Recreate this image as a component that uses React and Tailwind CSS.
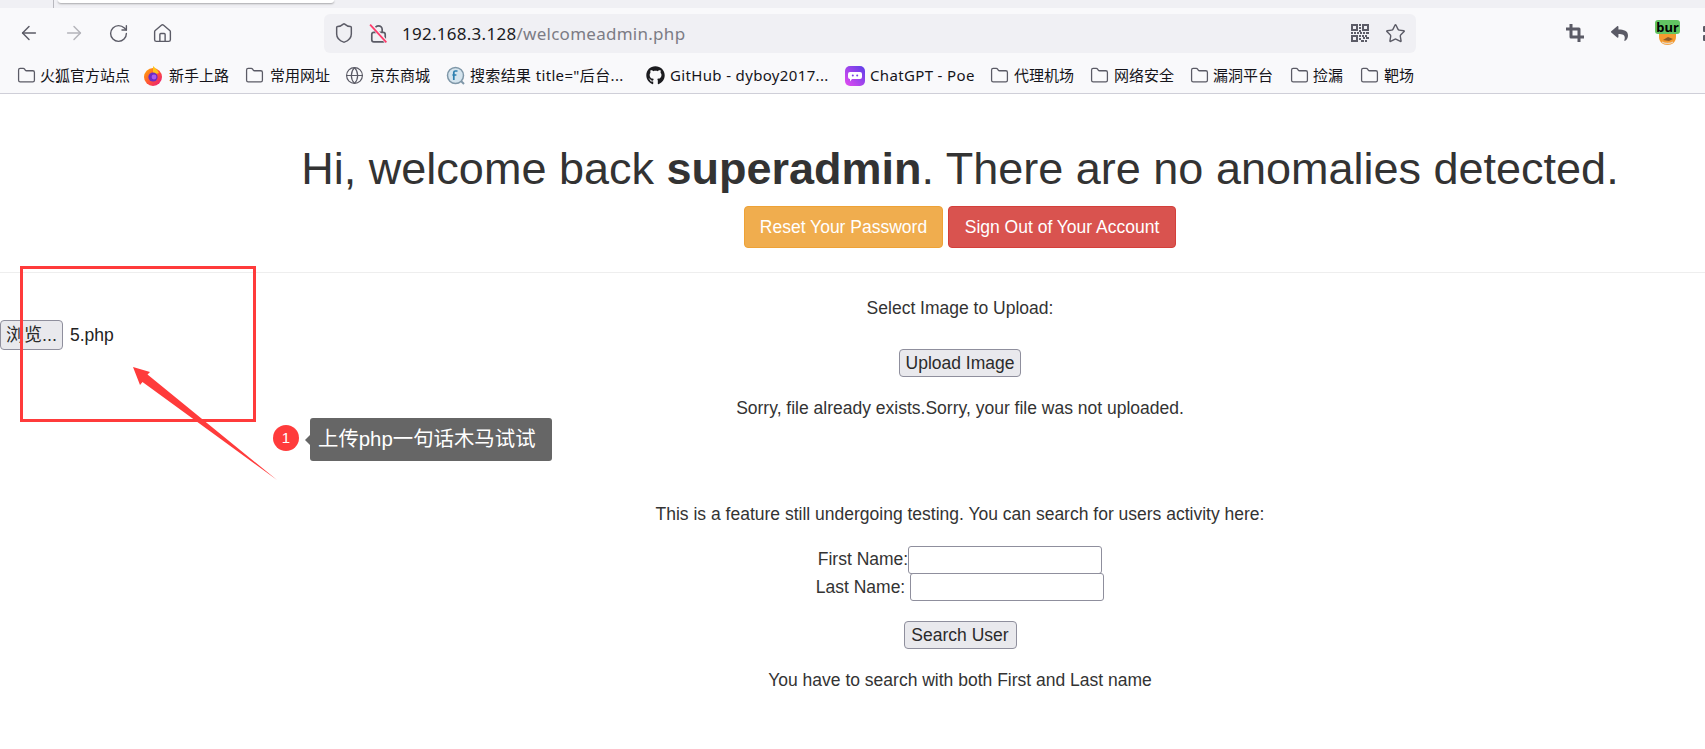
import React from "react";
import { ArrowLeft, ArrowRight, RotateCw, Home, Shield, Star, Folder, Globe } from "lucide-react";
import { FaGithub, FaReply } from "react-icons/fa";

const Fx = () => (
  <svg width="20" height="20" viewBox="0 0 20 20" className="shrink-0">
    <defs>
      <linearGradient id="fxg" x1="0" y1="0" x2="1" y2="1">
        <stop offset="0" stopColor="#ffb000" />
        <stop offset="0.55" stopColor="#ff4f3a" />
        <stop offset="1" stopColor="#e31587" />
      </linearGradient>
    </defs>
    <circle cx="10" cy="11" r="9" fill="url(#fxg)" />
    <path d="M10 0c2 2 5 4 6 7l-6 2z" fill="#ffc21a" />
    <circle cx="10" cy="11" r="4.6" fill="#6b2bc4" />
    <circle cx="11" cy="11" r="2.4" fill="#a45bf0" />
  </svg>
);

const Fav = () => (
  <svg width="20" height="20" viewBox="0 0 20 20" className="shrink-0">
    <circle cx="9.5" cy="9.5" r="8" fill="#d4e4ee" stroke="#7f97a8" strokeWidth="1.5" />
    <path d="M15 15l3 3" stroke="#7f97a8" strokeWidth="2" />
    <path d="M11.5 5H9.2C8.2 5 7.8 5.8 7.8 6.6V14M6.4 9h4" fill="none" stroke="#2c7fb0" strokeWidth="1.7" />
  </svg>
);

const Poe = () => (
  <svg width="20" height="20" viewBox="0 0 20 20" className="shrink-0">
    <defs>
      <linearGradient id="poeg" x1="0" y1="1" x2="1" y2="0">
        <stop offset="0" stopColor="#e64bf0" />
        <stop offset="1" stopColor="#5b3ee8" />
      </linearGradient>
    </defs>
    <rect width="20" height="20" rx="5" fill="url(#poeg)" />
    <path d="M5 6h10a2 2 0 0 1 2 2v3a2 2 0 0 1-2 2H7l-2 2.5V13a2 2 0 0 1-2-2V8a2 2 0 0 1 2-2z" fill="#fff" />
    <circle cx="7.8" cy="9.6" r="1" fill="#7a3fe8" />
    <circle cx="12.2" cy="9.6" r="1" fill="#7a3fe8" />
  </svg>
);

const NoLock = () => (
  <svg width="21" height="21" viewBox="0 0 20 20" fill="none" className="shrink-0">
    <path d="M6.5 9V6.200a3.500 3.500 0 0 1 7 0V9" stroke="#5b5b66" strokeWidth="1.6" />
    <rect x="3.6" y="9" width="12.8" height="9" rx="2" stroke="#5b5b66" strokeWidth="1.6" />
    <path d="M2.500 1.500L18 18.500" stroke="#f0f0f4" strokeWidth="3.4" />
    <path d="M2 1.500L17.500 18.500" stroke="#ff3b6b" strokeWidth="1.7" />
  </svg>
);

const Qr = () => (
  <svg width="18" height="18" viewBox="0 0 18 18" className="shrink-0 text-[#5b5b66]" fill="currentColor">
    <path fillRule="evenodd" d="M0 0h7v7H0zM2 2v3h3V2zM11 0h7v7h-7zM13 2v3h3V2zM0 11h7v7H0zM2 13v3h3v-3z" />
    <path d="M8 0h2v2H8zM8 3h2v2H8zM8 6h2v2H8zM0 8h2v2H0zM3 8h2v2H3zM6 8h2v2H6zM9 8h2v2H9zM12 8h2v2h-2zM15 8h3v2h-3zM8 11h2v2H8zM11 11h2v2h-2zM14 11h2v2h-2zM8 14h2v2H8zM12 13h2v2h-2zM15 13h3v2h-3zM10 16h3v2h-3zM14 16h2v2h-2z" />
  </svg>
);

const CropBold = () => (
  <svg width="18" height="18" viewBox="0 0 18 18" className="shrink-0 text-[#5b5b66]" fill="currentColor">
    <path fillRule="evenodd" d="M3.500 0h3v3.500H13a1.500 1.500 0 0 1 1.500 1.500v6.500H18v3h-3.500V18h-3v-3.500H5A1.500 1.500 0 0 1 3.500 13V6.500H0v-3h3.500zM6.500 6.500v5h5v-5z" />
  </svg>
);

const Bur = () => (
  <div className="relative w-[25px] h-[26px] shrink-0">
    <svg width="25" height="26" viewBox="0 0 25 26" className="absolute left-0 top-0">
      <path d="M4 13h17v4c0 5-4 8-8.500 8S4 22 4 17z" fill="#f59a2f" />
      <path d="M8 20l5-3 5 2-4 2z" fill="#8a5a2a" />
      <path d="M7 22c3 2 8 2 11 0" stroke="#e8d6bf" strokeWidth="1.500" fill="none" />
    </svg>
    <div className="absolute left-0 top-0 w-[25px] h-[14px] rounded-[3px] bg-[#62c462] text-[13px] leading-[14px] font-bold text-black text-center font-['Noto_Sans']">bur</div>
  </div>
);

const FolderIcon = () => <Folder size={19} strokeWidth={1.6} className="text-[#5b5b66] shrink-0" />;

const bookmarks = [
  { t: "火狐官方站点", icon: <FolderIcon />, w: "w-[112px]", g: "gap-[4px]" },
  { t: "新手上路", icon: <Fx />, w: "w-[88px]", g: "gap-[6px]" },
  { t: "常用网址", icon: <FolderIcon />, w: "w-[86px]", g: "gap-[6px]" },
  { t: "京东商城", icon: <Globe size={19} strokeWidth={1.5} className="text-[#5b5b66] shrink-0" />, w: "w-[87px]", g: "gap-[6px]" },
  { t: '搜索结果 title="后台...', icon: <Fav />, w: "w-[186px]", g: "gap-[4px]", latin: true },
  { t: "GitHub - dyboy2017...", icon: <FaGithub size={19} className="text-[#1b1b1f] shrink-0" />, w: "w-[185px]", g: "gap-[5px]", latin: true },
  { t: "ChatGPT - Poe", icon: <Poe />, w: "w-[131px]", g: "gap-[5px]", latin: true },
  { t: "代理机场", icon: <FolderIcon />, w: "w-[86px]", g: "gap-[5px]" },
  { t: "网络安全", icon: <FolderIcon />, w: "w-[86px]", g: "gap-[5px]" },
  { t: "漏洞平台", icon: <FolderIcon />, w: "w-[86px]", g: "gap-[4px]" },
  { t: "捡漏", icon: <FolderIcon />, w: "w-[56px]", g: "gap-[4px]" },
  { t: "靶场", icon: <FolderIcon />, w: "w-[56px]", g: "gap-[5px]" },
];

function Chrome() {
  return (
    <div className="w-[1705px] h-[94px] border-b border-[#cfcfd8] bg-[#f9f9fb] font-['Noto_Sans','Noto_Sans_CJK_SC',sans-serif] overflow-hidden">
      <div className="h-[8px] bg-[#f0f0f4] flex">
        <div className="w-[54px] h-[8px] border-r border-[#b8b8be]" />
        <div className="ml-[4px] w-[276px] h-[3px] bg-white rounded-b-[4px] shadow-[0_1px_2px_rgba(0,0,0,0.3)]" />
      </div>
      <div className="h-[50px] flex items-center">
        <div className="w-[324px] flex items-center pl-[18px] gap-[23px] shrink-0">
          <ArrowLeft size={22} strokeWidth={1.6} className="text-[#5b5b66]" />
          <ArrowRight size={22} strokeWidth={1.6} className="text-[#b4b4ba]" />
          <RotateCw size={21} strokeWidth={1.6} className="text-[#5b5b66]" />
          <Home size={21} strokeWidth={1.6} className="text-[#5b5b66]" />
        </div>
        <div className="w-[1092px] h-[39px] bg-[#f0f0f4] rounded-[6px] flex items-center pl-[9px] pr-[10px] shrink-0">
          <Shield size={22} strokeWidth={1.6} className="text-[#5b5b66] mr-[13px]" />
          <NoLock />
          <div className="ml-[13px] text-[17px] tracking-[0.27px] text-[#1b1b1f] leading-none">192.168.3.128<span className="text-[#7c7c85]">/welcomeadmin.php</span></div>
          <div className="ml-auto flex items-center gap-[16px]">
            <Qr />
            <Star size={21} strokeWidth={1.6} className="text-[#5b5b66]" />
          </div>
        </div>
        <div className="flex items-center pl-[150px] gap-[27px]">
          <CropBold />
          <FaReply size={17} className="text-[#5b5b66]" />
          <Bur />
          <div className="ml-[-4px] w-[10px] h-[15px] flex flex-col justify-between">
            <div className="w-[6px] h-[6px] border-2 border-[#5b5b66] rounded-[1px]" />
            <div className="w-[6px] h-[6px] border-2 border-[#5b5b66] rounded-[1px]" />
          </div>
        </div>
      </div>
      <div className="h-[35px] flex items-center pl-[17px] gap-[14px] text-[15px] text-[#15141a] whitespace-nowrap">
        {bookmarks.map((b) => (
          <div key={b.t} className={`${b.w} ${b.g} shrink-0 flex items-center`}>
            {b.icon}
            <span className={b.latin ? "tracking-[0.35px]" : "tracking-normal"}>{b.t}</span>
          </div>
        ))}
      </div>
    </div>
  );
}

const nativeBtn = "bg-[#e9e9ed] border border-[#8f8f9d] rounded-[4px] text-[#2b2b2b]";
const field = "w-[194px] h-[28px] bg-white border border-[#8f8f9d] rounded-[3px]";

export default function App() {
  return (
    <div className="relative w-[1705px] h-[749px] overflow-hidden bg-white font-['Liberation_Sans','Noto_Sans_CJK_SC',sans-serif] text-[#333]">
      <Chrome />
      <div className="w-[1920px] text-center text-[17.5px] leading-[25px]">
        <h1 className="pt-[50px] text-[45px] leading-[50px] font-normal whitespace-nowrap">
          Hi, welcome back <b>superadmin</b>. There are no anomalies detected.
        </h1>
        <div className="mt-[12px] flex justify-center gap-[5px] text-white">
          <button className="w-[199px] h-[42px] rounded-[4px] bg-[#f0ad4e] border border-[#eea236]">Reset Your Password</button>
          <button className="w-[228px] h-[42px] rounded-[4px] bg-[#d9534f] border border-[#d43f3a]">Sign Out of Your Account</button>
        </div>
        <div className="mt-[24px] border-t border-[#eee] w-full" />
        <p className="mt-[23px]">Select Image to Upload:</p>
        <div className="-mt-[1px] h-[29px] flex items-start justify-start text-[#222]">
          <button className={`${nativeBtn} w-[63px] h-[30px] text-[18px] leading-none`}>浏览...</button>
          <span className="ml-[7px] leading-[30px]">5.php</span>
        </div>
        <div className="flex justify-center">
          <button className={`${nativeBtn} w-[122px] h-[28px]`}>Upload Image</button>
        </div>
        <p className="mt-[19px]">Sorry, file already exists.Sorry, your file was not uploaded.</p>
        <p className="mt-[81px]">This is a feature still undergoing testing. You can search for users activity here:</p>
        <div className="mt-[19px] flex justify-center items-center h-[27px]">
          First Name:<input className={field} />
        </div>
        <div className="flex justify-center items-center h-[28px]">
          Last Name:<input className={`${field} ml-[5px]`} />
        </div>
        <div className="mt-[20px] flex justify-center">
          <button className={`${nativeBtn} w-[113px] h-[28px]`}>Search User</button>
        </div>
        <p className="mt-[19px]">You have to search with both First and Last name</p>
      </div>

      <div className="absolute left-[20px] top-[266px] w-[236px] h-[156px] border-[3px] border-[#ff3b3b]" />
      <svg className="absolute left-0 top-0 pointer-events-none" width="300" height="500" viewBox="0 0 300 500">
        <path d="M133 367L150 372L147.500 374.500L277 480L142.500 382L140 385z" fill="#ff3b3b" />
      </svg>
      <div className="absolute left-[273px] top-[425px] w-[26px] h-[26px] rounded-full bg-[#ff3b3b] text-white text-[15px] leading-[26px] text-center">1</div>
      <div className="absolute left-[310px] top-[418px] w-[242px] h-[43px] rounded-[3px] bg-[#666] text-white text-[20.4px] leading-[43px] pl-[8px] whitespace-nowrap">
        <div className="absolute -left-[5px] top-[17px] w-0 h-0 border-y-[5px] border-y-transparent border-r-[5px] border-r-[#666]" />
        上传php一句话木马试试
      </div>
    </div>
  );
}
